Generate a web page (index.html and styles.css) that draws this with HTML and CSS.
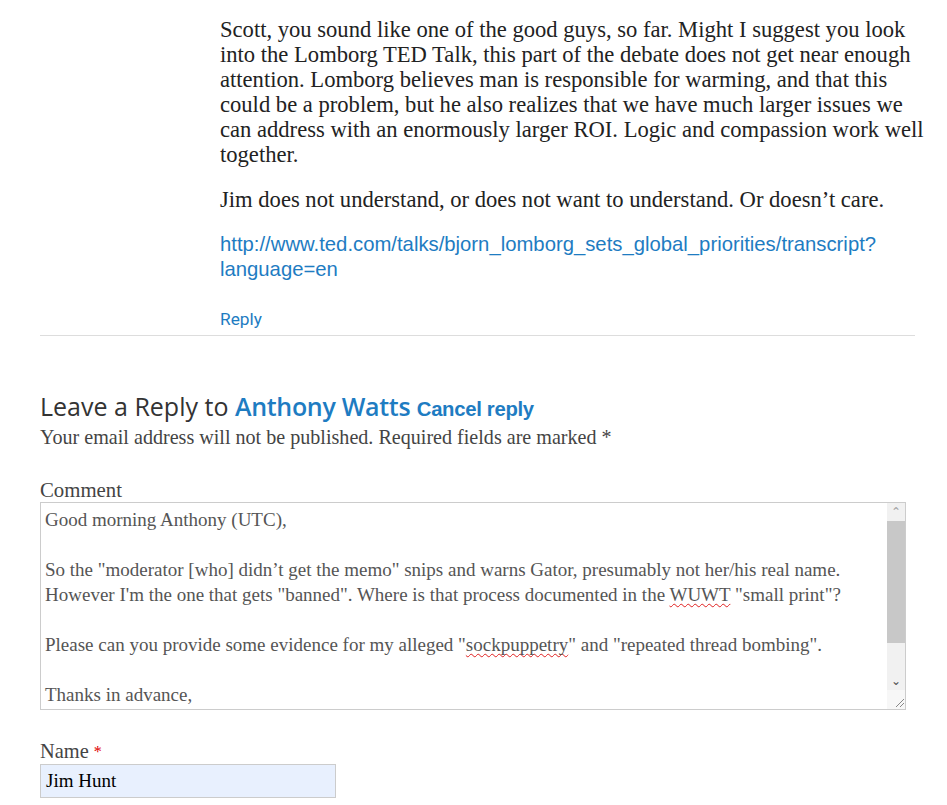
FILE: index.html
```html
<!DOCTYPE html>
<html>

<head>
    <title>Leave a Reply</title>
    <meta charset="utf-8">
    <meta name="viewport" content="width=device-width, initial-scale=1">
    <link rel="stylesheet" href="styles.css">
</head>

<body>
    <div class="page">
        <article class="comment">
            <div class="comment-body">
                <p>Scott, you sound like one of the good guys, so far. Might I suggest you look into the Lomborg TED Talk, this part of the debate does not get near enough attention. Lomborg believes man is responsible for warming, and that this could be a problem, but he also realizes that we have much larger issues we can address with an enormously larger ROI. Logic and compassion work well together.</p>
                <p>Jim does not understand, or does not want to understand. Or doesn’t care.</p>
                <p class="link-line"><a href="#">http://www.ted.com/talks/bjorn_lomborg_sets_global_priorities/transcript?<br>language=en</a></p>
            </div>
            <div class="reply"><a href="#">Reply</a></div>
        </article>

        <section class="respond">
            <h3 class="reply-title">Leave a Reply to <a href="#">Anthony Watts</a> <small><a href="#">Cancel reply</a></small></h3>
            <p class="notes">Your email address will not be published. Required fields are marked *</p>

            <div class="field">
                <label>Comment</label>
                <div class="textarea">
                    <div class="textarea-text">Good morning Anthony (UTC),

So the "moderator [who] didn’t get the memo" snips and warns Gator, presumably not her/his real name.
However I'm the one that gets "banned". Where is that process documented in the <span class="misspelt">WUWT</span> "small print"?

Please can you provide some evidence for my alleged "<span class="misspelt">sockpuppetry</span>" and "repeated thread bombing".

Thanks in advance,</div>
                    <div class="scrollbar">
                        <div class="sb-button sb-up">&#8963;</div>
                        <div class="sb-thumb"></div>
                        <div class="sb-track"></div>
                        <div class="sb-button sb-down">&#8964;</div>
                        <div class="sb-corner">
                            <svg width="19" height="19" viewBox="0 0 19 19">
                                <path d="M9 17 L17 9 M13 17 L17 13" stroke="#888" stroke-width="1" fill="none"/>
                            </svg>
                        </div>
                    </div>
                </div>
            </div>

            <div class="field field-name">
                <label>Name <span class="required">*</span></label>
                <div class="input">Jim Hunt</div>
            </div>
        </section>
    </div>
</body>

</html>
```

FILE: styles.css
```css
body {
    margin: 0;
    background-color: #FFFFFF;
    font-family: "Liberation Serif", serif;
    color: #333333;
}

a {
    color: #1E7CC2;
    text-decoration: none;
}

.page {
    padding: 17px 32px 0 40px;
}

.comment {
    border-bottom: 1px solid #DDDDDD;
}

.comment-body {
    padding-left: 180px;
    margin-right: -12px;
    font-size: 22.6px;
    line-height: 25px;
    color: #222222;
}

.comment-body p {
    margin: 0 0 20px 0;
}

.link-line {
    font-family: "Liberation Sans", Arial, sans-serif;
    font-size: 20.3px;
}

.reply {
    padding: 7px 0 6px 180px;
    font-family: Roboto, "Liberation Sans", sans-serif;
    font-size: 17.3px;
    line-height: 20px;
}

.respond {
    padding-top: 55px;
}

.reply-title {
    margin: 0;
    font-family: "Open Sans", sans-serif;
    font-size: 25px;
    line-height: 30px;
    font-weight: 500;
    color: #333333;
}

.reply-title a {
    font-weight: 600;
    letter-spacing: -0.3px;
}

.reply-title small {
    font-family: "Liberation Sans", Arial, sans-serif;
    font-size: 20.3px;
    font-weight: bold;
    letter-spacing: 0;
}

.notes {
    margin: 1px 0 0 0;
    font-size: 20.1px;
    line-height: 25px;
    color: #444444;
}

.field {
    margin-top: 27px;
}

.field label {
    display: block;
    font-size: 20.8px;
    line-height: 25px;
    color: #444444;
}

.required {
    color: #E00000;
    font-size: 16px;
    vertical-align: top;
}

.textarea {
    display: flex;
    width: 864px;
    height: 206px;
    border: 1px solid #CCCCCC;
    overflow: hidden;
}

.textarea-text {
    flex-grow: 1;
    padding: 4px 0 0 4px;
    white-space: pre-wrap;
    font-size: 19px;
    line-height: 25px;
    color: #555555;
}

.misspelt {
    text-decoration: underline wavy #E02020;
    text-decoration-thickness: 1px;
    text-decoration-skip-ink: none;
    text-underline-offset: 2px;
}

.scrollbar {
    width: 18px;
    display: flex;
    flex-direction: column;
    background-color: #F1F1F1;
}

.sb-button {
    height: 18px;
    text-align: center;
    font-family: "DejaVu Sans", sans-serif;
    font-size: 12px;
    line-height: 18px;
    color: #A3A3A3;
}

.sb-down {
    color: #505050;
}

.sb-thumb {
    height: 122px;
    background-color: #C8C8C8;
}

.sb-track {
    flex-grow: 1;
}

.sb-corner {
    height: 19px;
    background-color: #F7F7F7;
}

.sb-corner svg {
    display: block;
}

.field-name {
    margin-top: 29px;
}

.field-name label {
    font-size: 20.4px;
}

.input {
    width: 289px;
    height: 32px;
    padding-left: 5px;
    border: 1px solid #CCCCCC;
    background-color: #E8F0FE;
    font-size: 19px;
    line-height: 32px;
    color: #000000;
}
```
